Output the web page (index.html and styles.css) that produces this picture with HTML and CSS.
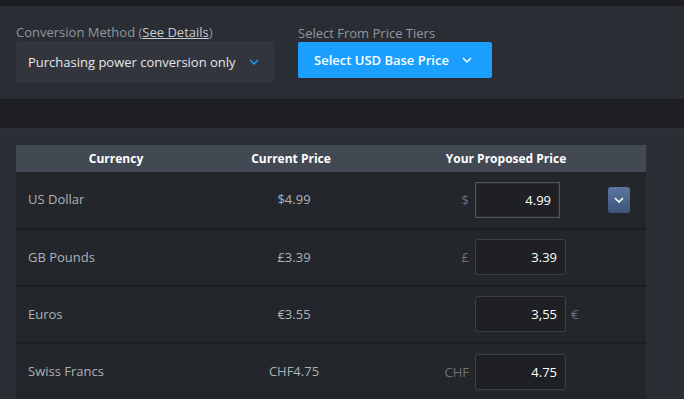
FILE: index.html
```html
<!DOCTYPE html>
<html lang="en">
<head>
  <meta charset="UTF-8" />
  <meta name="viewport" content="width=device-width, initial-scale=1.0"/>
  <title>Regional Pricing</title>
  <link rel="stylesheet" href="styles.css">
</head>
<body>

  <div class="topbar"></div>

  <!-- Conversion options -->
  <section class="options">
    <div class="field">
      <label class="field-label">Conversion Method (<a href="#">See Details</a>)</label>
      <div class="select-box">
        <span>Purchasing power conversion only</span>
        <svg class="chev" width="10" height="6" viewBox="0 0 10 6"><path d="M1 1l4 4 4-4" fill="none" stroke="#1a9fff" stroke-width="1.4"/></svg>
      </div>
    </div>
    <div class="field">
      <label class="field-label tiers">Select From Price Tiers</label>
      <button class="tier-btn">
        Select USD Base Price
        <svg class="chev" width="10" height="6" viewBox="0 0 10 6"><path d="M1 1l4 4 4-4" fill="none" stroke="#fff" stroke-width="1.4"/></svg>
      </button>
    </div>
  </section>

  <div class="band"></div>

  <!-- Price table -->
  <main class="content">
    <table class="prices">
      <thead>
        <tr>
          <th class="col-name">Currency</th>
          <th class="col-current">Current Price</th>
          <th class="col-proposed">Your Proposed Price</th>
        </tr>
      </thead>
      <tbody>
        <tr>
          <td>US Dollar</td>
          <td class="current">$4.99</td>
          <td>
            <div class="proposed">
              <span class="pre">$</span>
              <input class="price-input focused" value="4.99">
              <span class="post"></span>
              <button class="menu-btn">
                <svg width="10" height="6" viewBox="0 0 10 6"><path d="M1 1l4 4 4-4" fill="none" stroke="#fff" stroke-width="1.6"/></svg>
              </button>
            </div>
          </td>
        </tr>
        <tr>
          <td>GB Pounds</td>
          <td class="current">£3.39</td>
          <td>
            <div class="proposed">
              <span class="pre">£</span>
              <input class="price-input" value="3.39">
              <span class="post"></span>
            </div>
          </td>
        </tr>
        <tr>
          <td>Euros</td>
          <td class="current">€3.55</td>
          <td>
            <div class="proposed">
              <span class="pre"></span>
              <input class="price-input" value="3,55">
              <span class="post">€</span>
            </div>
          </td>
        </tr>
        <tr>
          <td>Swiss Francs</td>
          <td class="current">CHF4.75</td>
          <td>
            <div class="proposed">
              <span class="pre">CHF</span>
              <input class="price-input" value="4.75">
              <span class="post"></span>
            </div>
          </td>
        </tr>
      </tbody>
    </table>
  </main>

</body>
</html>
```

FILE: styles.css
```css
/* Global Styles */
* {
  box-sizing: border-box;
  margin: 0;
  padding: 0;
}

body {
  background: #2b2e34;
  color: #acb2b8;
  font-family: 'Open Sans', 'Noto Sans', sans-serif;
  font-size: 13px;
}

.topbar {
  height: 6px;
  background: #1c1e22;
}

/* Options panel */
.options {
  display: flex;
  gap: 24px;
  background: #2a2d33;
  padding: 17px 16px 16px;
  height: 93px;
}

.field-label {
  display: block;
  color: #8f98a0;
  line-height: 18px;
}

.field-label a {
  color: #c6cbd0;
  text-decoration: underline;
}

.field-label.tiers {
  margin-top: 1px;
}

.select-box {
  display: flex;
  align-items: center;
  justify-content: space-between;
  width: 258px;
  height: 42px;
  padding: 0 15px 0 12px;
  background: #32353c;
  border-radius: 3px;
  color: #e4e7ea;
}

.tier-btn {
  display: flex;
  align-items: center;
  height: 36px;
  width: 194px;
  padding: 0 20px 0 16px;
  justify-content: space-between;
  background: #1a9fff;
  border: none;
  border-radius: 2px;
  color: #fff;
  font-family: inherit;
  font-size: 13px;
  font-weight: 600;
}

.band {
  height: 30px;
  background: #1d1f23;
}

/* Price table */
.content {
  padding: 16px;
  border-top: 1px solid #30333a;
  margin-top: -1px;
}

.prices {
  width: 630px;
  border-collapse: collapse;
  table-layout: fixed;
  background: #23262b;
}

.prices th {
  height: 27px;
  background: #434953;
  color: #fff;
  font-size: 12px;
  font-weight: 700;
  text-align: center;
}

.col-name { width: 200px; }
.col-current { width: 150px; }
.col-proposed { width: 280px; }

.prices tbody tr {
  height: 57px;
}

.prices td {
  border-bottom: 2px solid #1c1e22;
  padding: 0 12px 2px;
  color: #acb2b8;
}

.prices tr:last-child td {
  border-bottom: none;
}

.prices td.current {
  text-align: center;
  padding-left: 6px;
  padding-right: 0;
}

.prices td:last-child {
  padding: 0 0 1px;
}

.proposed {
  display: flex;
  align-items: center;
}

.pre {
  width: 109px;
  text-align: right;
  padding-right: 6px;
  color: #6b7178;
}

.post {
  width: 30px;
  padding-left: 5px;
  color: #6b7178;
}

.price-input {
  width: 91px;
  height: 36px;
  background: #1e2024;
  border: 1px solid #3d4048;
  border-radius: 3px;
  color: #fff;
  font-family: inherit;
  font-size: 13px;
  text-align: right;
  padding: 0 8px;
  outline: none;
}

.price-input.focused {
  width: 85px;
  border-color: #50545c;
  border-radius: 0;
  box-shadow: inset 0 0 0 1px #2a2c31;
}

.menu-btn {
  display: flex;
  align-items: center;
  justify-content: center;
  width: 22px;
  height: 26px;
  margin-left: 18px;
  border: none;
  border-radius: 3px;
  background: linear-gradient(#5a76a0, #3e5478);
}
```
